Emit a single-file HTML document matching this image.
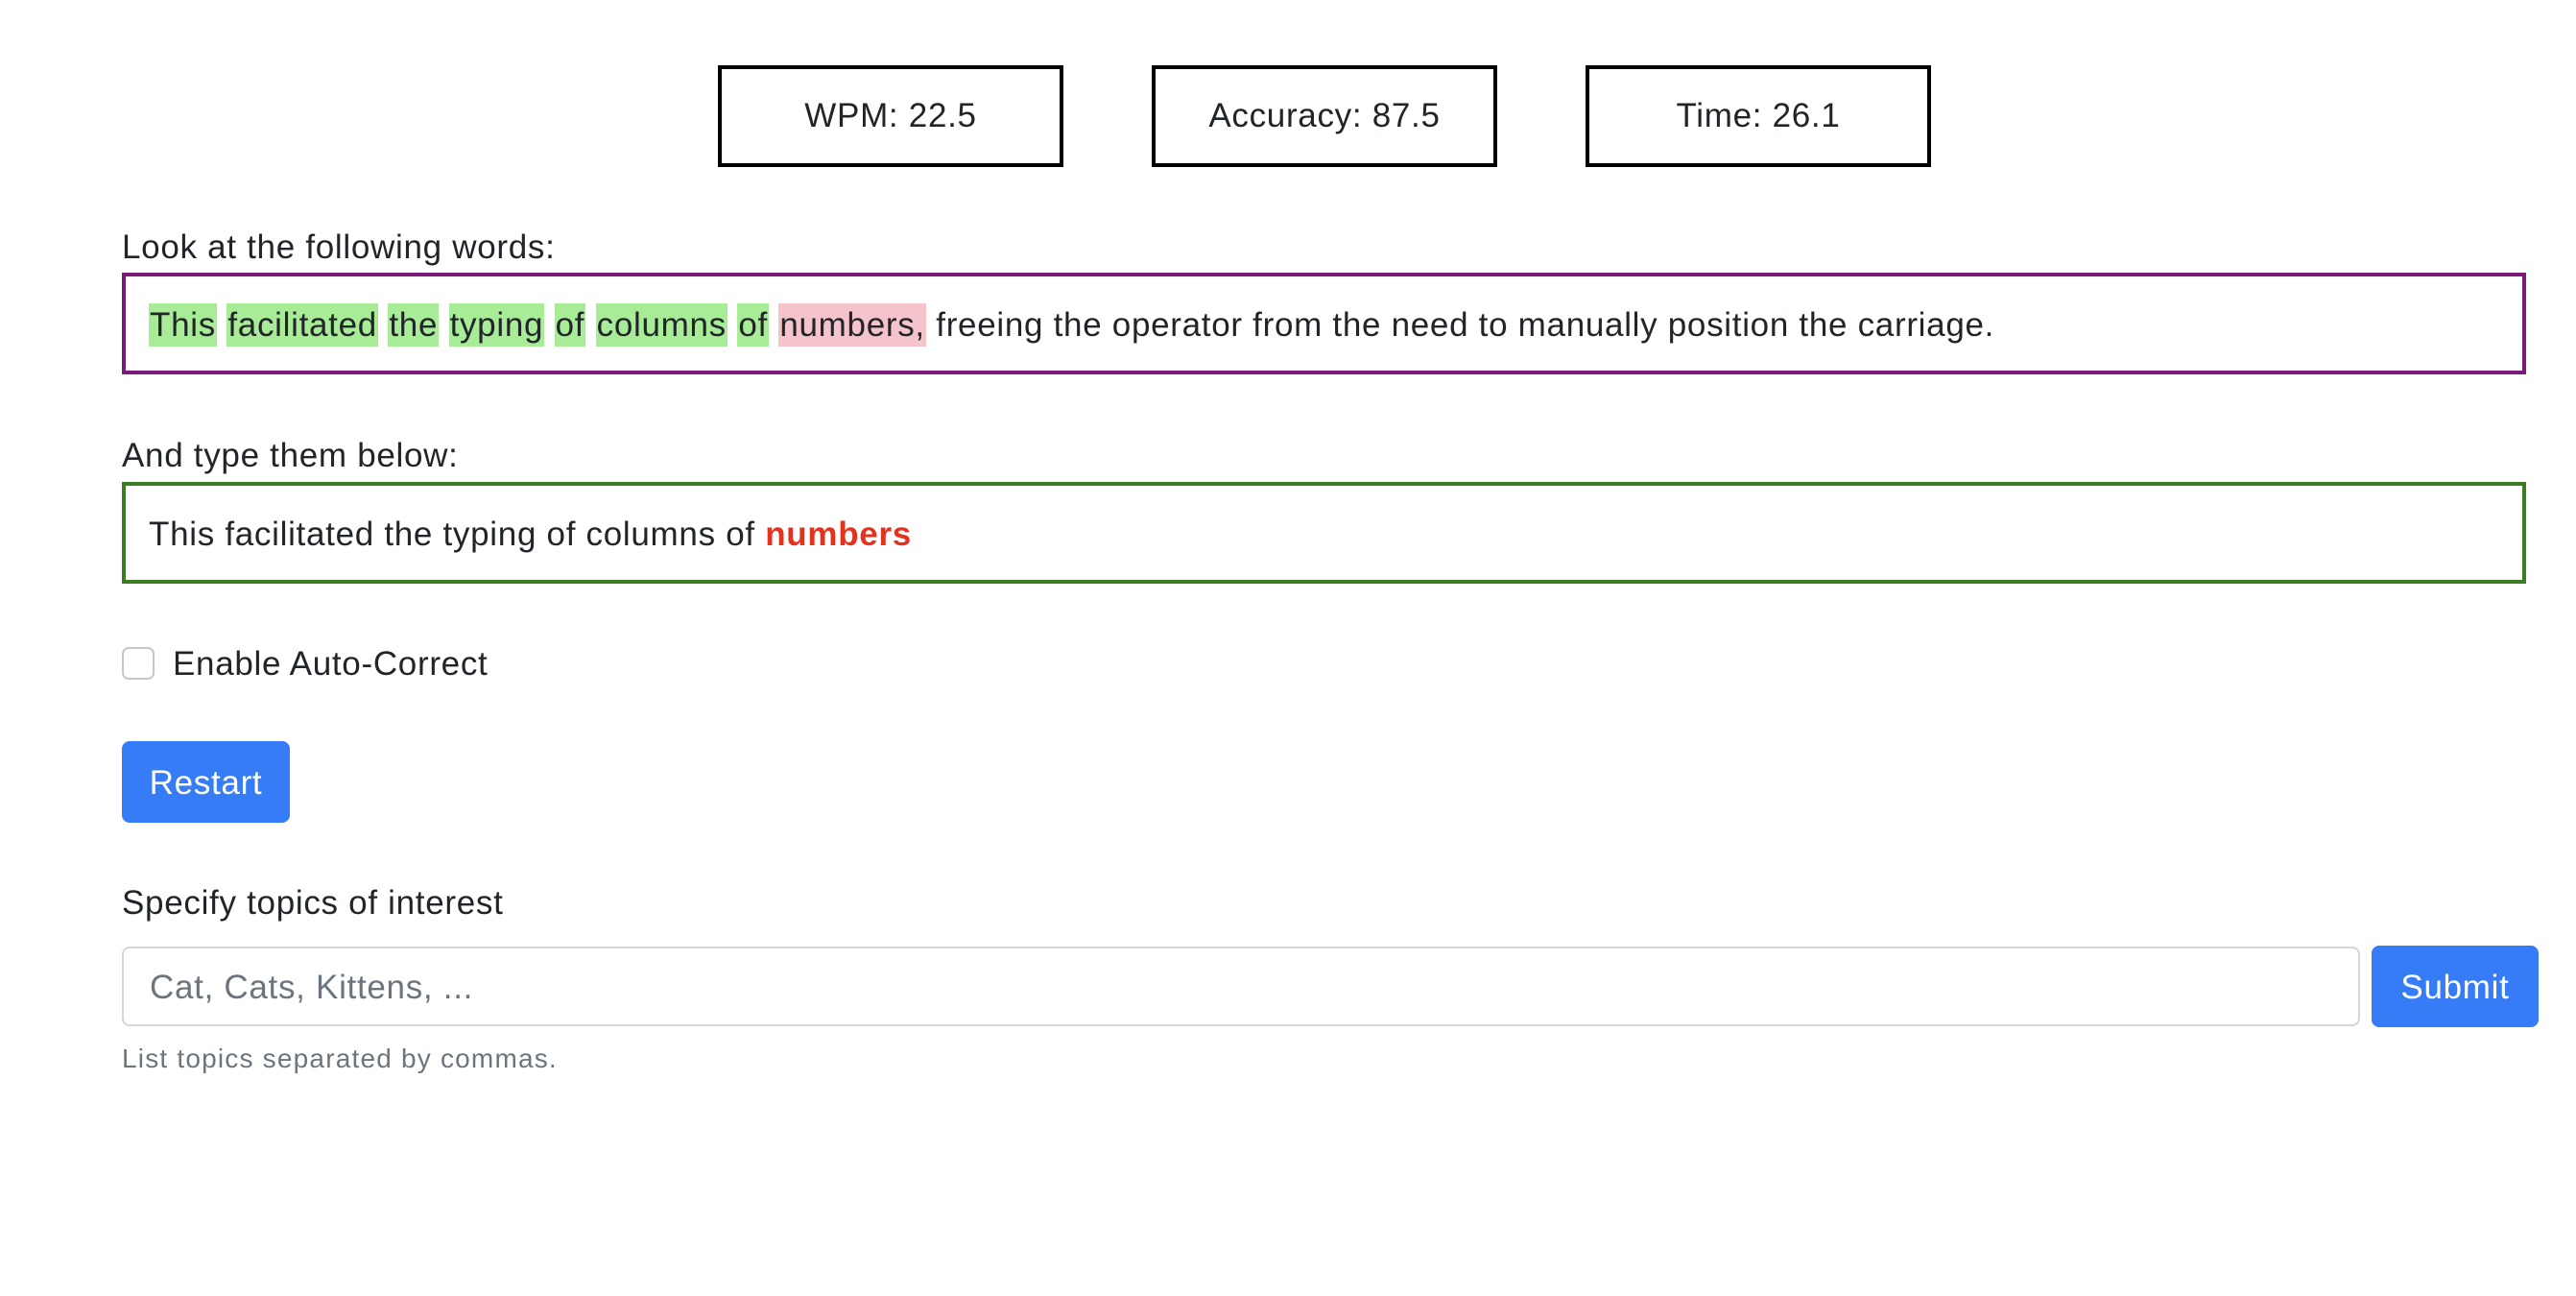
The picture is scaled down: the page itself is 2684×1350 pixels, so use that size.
<!DOCTYPE html>
<html><head><meta charset="utf-8"><style>
*{box-sizing:border-box;margin:0;padding:0}
body{width:2684px;height:1350px;background:#fff;font-family:"Liberation Sans",Arial,sans-serif;color:#212529;position:relative;overflow:hidden;letter-spacing:0.7px}
.stat{position:absolute;top:68px;width:360px;height:106px;border:4px solid #000;font-size:35px;display:flex;align-items:center;justify-content:center}
.lbl{position:absolute;left:127px;font-size:35px}
.box{position:absolute;left:127px;width:2505px;height:106px;border:4px solid;font-size:35px;padding-left:24px;display:flex;align-items:center;white-space:nowrap;padding-top:4px}
.g{background:#a8ec98;padding:3px 1px}.p{background:#f5c3cc;padding:3px 1px}
.chk{position:absolute;left:127px;top:674px;width:34px;height:34px;border:2px solid #c4c8cc;border-radius:7px}
.btn{position:absolute;background:#367cf7;color:#fff;font-size:35px;border-radius:8px;display:flex;align-items:center;justify-content:center}
.inp{position:absolute;left:127px;top:986px;width:2332px;height:83px;border:2px solid #d4d7da;border-radius:8px;font-size:35px;color:#6c757d;padding-left:27px;display:flex;align-items:center}
</style></head><body>
<div class="stat" style="left:748px">WPM: 22.5</div>
<div class="stat" style="left:1200px">Accuracy: 87.5</div>
<div class="stat" style="left:1652px">Time: 26.1</div>
<div class="lbl" style="top:238px">Look at the following words:</div>
<div class="box" style="top:284px;border-color:#7b1a7b"><span><span class="g">This</span> <span class="g">facilitated</span> <span class="g">the</span> <span class="g">typing</span> <span class="g">of</span> <span class="g">columns</span> <span class="g">of</span> <span class="p">numbers,</span> freeing the operator from the need to manually position the carriage.</span></div>
<div class="lbl" style="top:455px">And type them below:</div>
<div class="box" style="top:502px;border-color:#3a7d22"><span>This facilitated the typing of columns of <b style="color:#e5321e">numbers</b></span></div>
<div class="chk"></div>
<div class="lbl" style="left:180px;top:672px">Enable Auto-Correct</div>
<div class="btn" style="left:127px;top:772px;width:175px;height:85px;padding-top:3px">Restart</div>
<div class="lbl" style="top:921px">Specify topics of interest</div>
<div class="inp" style="padding-top:3px">Cat, Cats, Kittens, ...</div>
<div class="btn" style="left:2471px;top:985px;width:174px;height:85px;padding-top:3px">Submit</div>
<div class="lbl" style="top:1087px;font-size:28px;color:#6c757d;letter-spacing:1.2px">List topics separated by commas.</div>
</body></html>
